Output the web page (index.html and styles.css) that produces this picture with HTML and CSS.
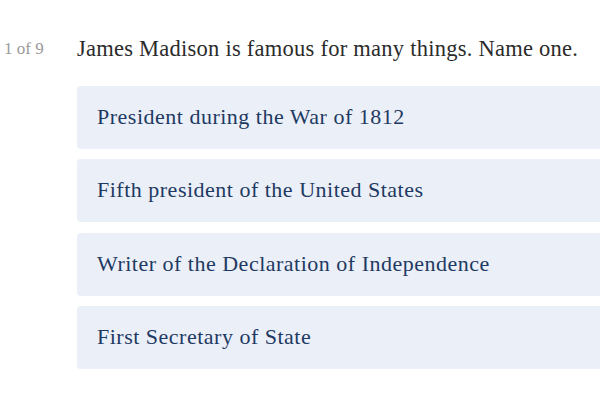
FILE: index.html
```html
<!DOCTYPE html>
<html>
<head>
<meta charset="utf-8">
<link rel="stylesheet" href="styles.css">
</head>
<body>
<div class="quiz">
  <div class="counter">1 of 9</div>
  <div class="main">
    <div class="question">James Madison is famous for many things. Name one.</div>
    <div class="options">
      <div class="option">President during the War of 1812</div>
      <div class="option">Fifth president of the United States</div>
      <div class="option">Writer of the Declaration of Independence</div>
      <div class="option">First Secretary of State</div>
    </div>
  </div>
</div>
</body>
</html>
```
FILE: styles.css
```css
html, body {
  margin: 0;
  padding: 0;
  background: #ffffff;
  overflow: hidden;
}
body {
  width: 600px;
  height: 400px;
  font-family: "Liberation Serif", "DejaVu Serif", serif;
}
.quiz {
  display: flex;
  padding-top: 36px;
}
.counter {
  width: 77px;
  flex: none;
  box-sizing: border-box;
  padding-left: 4px;
  padding-top: 3px;
  font-size: 17px;
  color: #9a9a9a;
  line-height: 20px;
}
.main {
  flex: 1;
  min-width: 0;
}
.question {
  font-size: 22.5px;
  line-height: 26px;
  color: #2b2b2b;
  letter-spacing: 0.25px;
  white-space: nowrap;
}
.options {
  margin-top: 24px;
  display: flex;
  flex-direction: column;
  gap: 10.33px;
}
.option {
  height: 63px;
  box-sizing: border-box;
  display: flex;
  align-items: center;
  padding-left: 20px;
  padding-bottom: 1px;
  background: #ebeff8;
  border-radius: 4px 0 0 4px;
  color: #1e3a62;
  font-size: 22px;
  letter-spacing: 0.5px;
  white-space: nowrap;
}
```
